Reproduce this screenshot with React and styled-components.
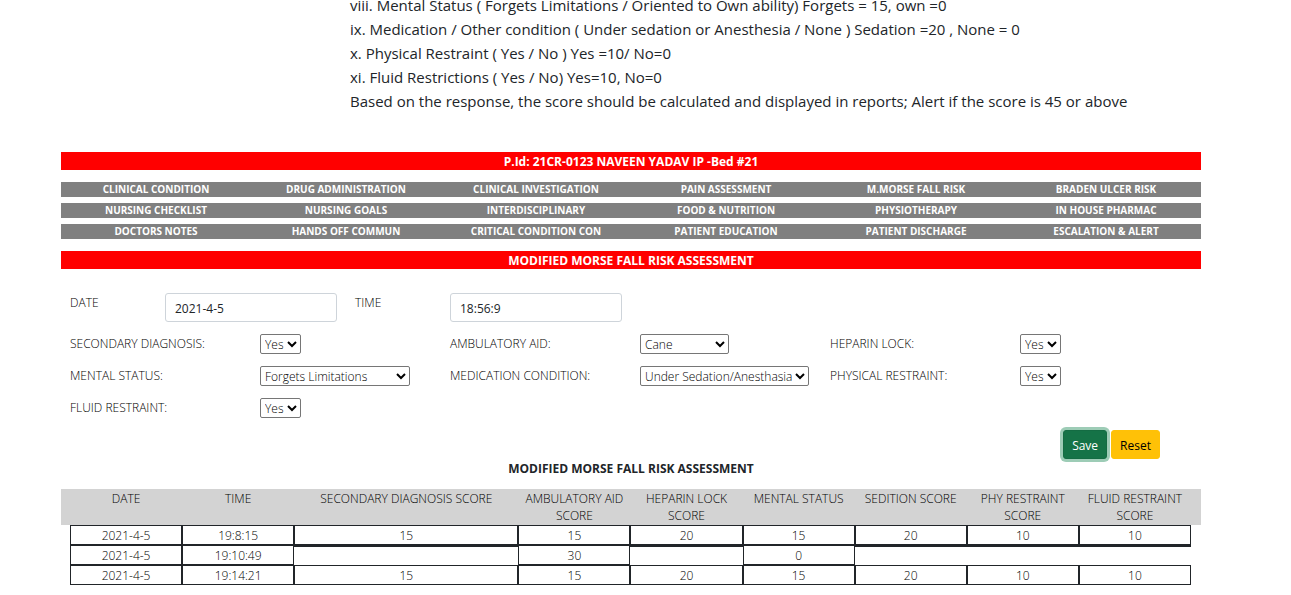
import React from "react";
import styled, { createGlobalStyle } from "styled-components";

const GlobalStyle = createGlobalStyle`
  * { box-sizing: border-box; }
  body {
    margin: 0;
    background: #fff;
    color: #212529;
    font-family: "Open Sans", "Noto Sans", sans-serif;
    font-size: 12px;
    line-height: 18px;
    overflow-x: hidden;
  }
`;

const Page = styled.main`
  display: flow-root;
  padding: 0 90px 0 61px;
`;

const Notes = styled.section`
  margin: -7px 0 39px 289px;
  font-size: 15px;
  line-height: 24px;
  white-space: nowrap;
  p { margin: 0; }
`;

const Banner = styled.h2`
  margin: 0;
  padding-top: 2px;
  background: #ff0000;
  color: #fff;
  font-size: 12px;
  font-weight: 700;
  line-height: 16px;
  text-align: center;
`;

const Tabs = styled.nav`
  display: grid;
  grid-template-columns: repeat(6, 1fr);
  row-gap: 6px;
  margin: 12px 0;
`;

const Tab = styled.a`
  background: #808080;
  color: #fff;
  font-size: 10px;
  font-weight: 700;
  line-height: 15px;
  text-align: center;
  text-decoration: none;
`;

const Form = styled.form`
  padding-top: 24px;
`;

const Row = styled.div`
  display: grid;
  grid-template-columns: repeat(12, 1fr);
  min-height: 20px;
  margin-bottom: 12px;
`;

const Cell = styled.div`
  grid-column: span ${(p) => p.$span};
  padding: 0 9px;
`;

const Label = styled.label`
  display: block;
  padding-top: 1px;
  color: #000;
  font-weight: 300;
  white-space: nowrap;
`;

const TextInput = styled.input`
  display: block;
  width: 100%;
  height: 29px;
  padding: 2px 9px 0;
  border: 1px solid #ced4da;
  border-radius: 3px;
  background: #fff;
  color: #212529;
  font: inherit;
`;

const Select = styled.select`
  display: block;
  width: ${(p) => p.$width}px;
  height: 20px;
  padding: 0;
  border: 1px solid #767676;
  border-radius: 2px;
  background: #fff;
  color: #000;
  font: inherit;
  font-weight: 300;
`;

const Actions = styled.div`
  display: flex;
  justify-content: flex-end;
  gap: 4px;
  padding-right: 41px;
`;

const Button = styled.button`
  height: 29px;
  padding: 2px 8px 0;
  border: 1px solid ${(p) => (p.$primary ? "#146c43" : "#ffc107")};
  border-radius: 3px;
  background: ${(p) => (p.$primary ? "#157347" : "#ffc107")};
  box-shadow: ${(p) => (p.$primary ? "0 0 0 3px rgba(60, 153, 110, 0.5)" : "none")};
  color: ${(p) => (p.$primary ? "#fff" : "#000")};
  font: inherit;
`;

const Title = styled.h3`
  margin: 0 0 12px;
  padding-top: 2px;
  font-size: 12px;
  font-weight: 700;
  line-height: 16px;
  text-align: center;
`;

const TableWrap = styled.div`
  padding: 0 10px 0 9px;
`;

const Table = styled.table`
  width: 100%;
  table-layout: fixed;
  border-collapse: collapse;
  text-align: center;
  color: #000;
  font-weight: 300;

  th, td { padding: 0; vertical-align: top; font-weight: inherit; }
  th { padding: 1px 0; background: #d3d3d3; line-height: 17px; }
  th:first-child { box-shadow: -9px 0 #d3d3d3; }
  th:last-child { box-shadow: 10px 0 #d3d3d3; }
`;

const Col = styled.col`
  width: ${(p) => p.$share}%;
`;

const Value = styled.div`
  border: 1px solid #212529;
  padding-top: ${(p) => (p.$empty ? 0 : 2)}px;
  line-height: 16px;
`;

const NOTES = [
  "viii. Mental Status ( Forgets Limitations / Oriented to Own ability) Forgets = 15, own =0",
  "ix. Medication / Other condition ( Under sedation or Anesthesia / None ) Sedation =20 , None = 0",
  "x. Physical Restraint ( Yes / No ) Yes =10/ No=0",
  "xi. Fluid Restrictions ( Yes / No) Yes=10, No=0",
  "Based on the response, the score should be calculated and displayed in reports; Alert if the score is 45 or above",
];

const TABS = [
  "CLINICAL CONDITION", "DRUG ADMINISTRATION", "CLINICAL INVESTIGATION",
  "PAIN ASSESSMENT", "M.MORSE FALL RISK", "BRADEN ULCER RISK",
  "NURSING CHECKLIST", "NURSING GOALS", "INTERDISCIPLINARY",
  "FOOD & NUTRITION", "PHYSIOTHERAPY", "IN HOUSE PHARMAC",
  "DOCTORS NOTES", "HANDS OFF COMMUN", "CRITICAL CONDITION CON",
  "PATIENT EDUCATION", "PATIENT DISCHARGE", "ESCALATION & ALERT",
];

const YES_NO = ["Yes", "No"];

const FIELD_ROWS = [
  [
    { id: "diagnosis", label: "SECONDARY DIAGNOSIS:", width: 41, options: YES_NO },
    { id: "aid", label: "AMBULATORY AID:", width: 89, options: ["Cane", "Furniture", "None"] },
    { id: "heparin", label: "HEPARIN LOCK:", width: 41, options: YES_NO },
  ],
  [
    { id: "mental", label: "MENTAL STATUS:", width: 150, options: ["Forgets Limitations", "Oriented to Own Ability"] },
    { id: "medication", label: "MEDICATION CONDITION:", width: 169, options: ["Under Sedation/Anesthasia", "None"] },
    { id: "physical", label: "PHYSICAL RESTRAINT:", width: 41, options: YES_NO },
  ],
  [{ id: "fluid", label: "FLUID RESTRAINT:", width: 41, options: YES_NO }],
];

const COLUMNS = [
  { name: "DATE", share: 10 },
  { name: "TIME", share: 10 },
  { name: "SECONDARY DIAGNOSIS SCORE", share: 20 },
  { name: "AMBULATORY AID SCORE", share: 10 },
  { name: "HEPARIN LOCK SCORE", share: 10 },
  { name: "MENTAL STATUS", share: 10 },
  { name: "SEDITION SCORE", share: 10 },
  { name: "PHY RESTRAINT SCORE", share: 10 },
  { name: "FLUID RESTRAINT SCORE", share: 10 },
];

const RECORDS = [
  ["2021-4-5", "19:8:15", "15", "15", "20", "15", "20", "10", "10"],
  ["2021-4-5", "19:10:49", "", "30", "", "0", "", "", ""],
  ["2021-4-5", "19:14:21", "15", "15", "20", "15", "20", "10", "10"],
];

export default function App() {
  return (
    <Page>
      <GlobalStyle />
      <Notes>
        {NOTES.map((line) => <p key={line}>{line}</p>)}
      </Notes>
      <Banner>P.Id: 21CR-0123 NAVEEN YADAV IP -Bed #21</Banner>
      <Tabs>
        {TABS.map((name) => <Tab key={name} href="#">{name}</Tab>)}
      </Tabs>
      <Banner>MODIFIED MORSE FALL RISK ASSESSMENT</Banner>
      <Form onSubmit={(e) => e.preventDefault()}>
        <Row>
          <Cell $span={1}><Label htmlFor="date">DATE</Label></Cell>
          <Cell $span={2}><TextInput id="date" defaultValue="2021-4-5" /></Cell>
          <Cell $span={1}><Label htmlFor="time">TIME</Label></Cell>
          <Cell $span={2}><TextInput id="time" defaultValue="18:56:9" /></Cell>
        </Row>
        {FIELD_ROWS.map((fields) => (
          <Row key={fields[0].id}>
            {fields.map((f) => (
              <React.Fragment key={f.id}>
                <Cell $span={2}><Label htmlFor={f.id}>{f.label}</Label></Cell>
                <Cell $span={2}>
                  <Select id={f.id} $width={f.width}>
                    {f.options.map((o) => <option key={o}>{o}</option>)}
                  </Select>
                </Cell>
              </React.Fragment>
            ))}
          </Row>
        ))}
        <Actions>
          <Button type="submit" $primary>Save</Button>
          <Button type="reset">Reset</Button>
        </Actions>
      </Form>
      <Title>MODIFIED MORSE FALL RISK ASSESSMENT</Title>
      <TableWrap>
        <Table>
          <colgroup>
            {COLUMNS.map((c) => <Col key={c.name} $share={c.share} />)}
          </colgroup>
          <thead>
            <tr>{COLUMNS.map((c) => <th key={c.name} scope="col">{c.name}</th>)}</tr>
          </thead>
          <tbody>
            {RECORDS.map((record) => (
              <tr key={record[1]}>
                {record.map((value, i) => <td key={i}><Value $empty={!value}>{value}</Value></td>)}
              </tr>
            ))}
          </tbody>
        </Table>
      </TableWrap>
    </Page>
  );
}
